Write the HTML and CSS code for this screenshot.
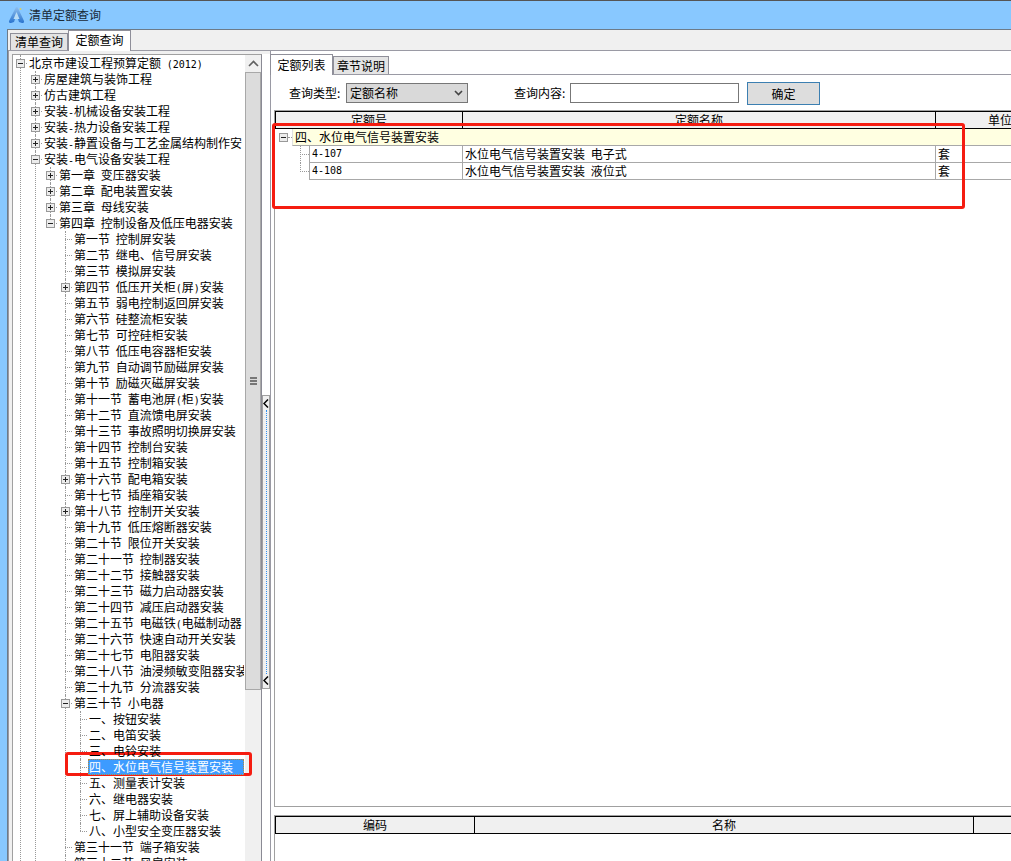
FILE: index.html
```html
<!DOCTYPE html>
<html lang="zh-CN">
<head>
    <meta charset="UTF-8">
    <title>清单定额查询</title>
    <link rel="stylesheet" href="styles.css">
</head>
<body>
    <div class="window">
        <div class="titlebar">
            <svg class="app-icon" width="17" height="18" viewBox="0 0 17 18">
                <defs>
                    <linearGradient id="iconBlue" x1="0" y1="0" x2="0" y2="1">
                        <stop offset="0" stop-color="#8fbfee"/>
                        <stop offset="1" stop-color="#2a74cf"/>
                    </linearGradient>
                </defs>
                <path d="M8 1 L1 15 Q0.5 17 3 17 L6 16 L8.5 9 L11 16 L14 17 Q16.5 17 16 15 L9.5 1 Z" fill="url(#iconBlue)"/>
                <path d="M8.5 6 L5.5 13 L11.5 13 Z" fill="#b9dcf6"/>
                <circle cx="12.5" cy="3" r="1" fill="#d8cf6a"/>
            </svg>
            <span>清单定额查询</span>
        </div>
        <div class="client">
            <div class="tabs main-tabs">
                <div class="tab">清单查询</div>
                <div class="tab active">定额查询</div>
            </div>
            <div class="main-pane">
                <div class="tree-panel">
                    <ul class="tree root">
                        <li class="more">
                            <div class="row"><i class="toggle minus"></i><span class="label">北京市建设工程预算定额 <em>(2012)</em></span></div>
                            <ul class="tree">
                                <li><div class="row"><i class="toggle plus"></i><span class="label">房屋建筑与装饰工程</span></div></li>
                                <li><div class="row"><i class="toggle plus"></i><span class="label">仿古建筑工程</span></div></li>
                                <li><div class="row"><i class="toggle plus"></i><span class="label">安装<em>-</em>机械设备安装工程</span></div></li>
                                <li><div class="row"><i class="toggle plus"></i><span class="label">安装<em>-</em>热力设备安装工程</span></div></li>
                                <li><div class="row"><i class="toggle plus"></i><span class="label">安装<em>-</em>静置设备与工艺金属结构制作安</span></div></li>
                                <li class="more">
                                    <div class="row"><i class="toggle minus"></i><span class="label">安装<em>-</em>电气设备安装工程</span></div>
                                    <ul class="tree">
                                        <li><div class="row"><i class="toggle plus"></i><span class="label">第一章 变压器安装</span></div></li>
                                        <li><div class="row"><i class="toggle plus"></i><span class="label">第二章 配电装置安装</span></div></li>
                                        <li><div class="row"><i class="toggle plus"></i><span class="label">第三章 母线安装</span></div></li>
                                        <li>
                                            <div class="row"><i class="toggle minus"></i><span class="label">第四章 控制设备及低压电器安装</span></div>
                                            <ul class="tree">
                                                <li><div class="row"><i class="toggle"></i><span class="label">第一节 控制屏安装</span></div></li>
                                                <li><div class="row"><i class="toggle"></i><span class="label">第二节 继电、信号屏安装</span></div></li>
                                                <li><div class="row"><i class="toggle"></i><span class="label">第三节 模拟屏安装</span></div></li>
                                                <li><div class="row"><i class="toggle plus"></i><span class="label">第四节 低压开关柜<em>(</em>屏<em>)</em>安装</span></div></li>
                                                <li><div class="row"><i class="toggle"></i><span class="label">第五节 弱电控制返回屏安装</span></div></li>
                                                <li><div class="row"><i class="toggle"></i><span class="label">第六节 硅整流柜安装</span></div></li>
                                                <li><div class="row"><i class="toggle"></i><span class="label">第七节 可控硅柜安装</span></div></li>
                                                <li><div class="row"><i class="toggle"></i><span class="label">第八节 低压电容器柜安装</span></div></li>
                                                <li><div class="row"><i class="toggle"></i><span class="label">第九节 自动调节励磁屏安装</span></div></li>
                                                <li><div class="row"><i class="toggle"></i><span class="label">第十节 励磁灭磁屏安装</span></div></li>
                                                <li><div class="row"><i class="toggle"></i><span class="label">第十一节 蓄电池屏<em>(</em>柜<em>)</em>安装</span></div></li>
                                                <li><div class="row"><i class="toggle"></i><span class="label">第十二节 直流馈电屏安装</span></div></li>
                                                <li><div class="row"><i class="toggle"></i><span class="label">第十三节 事故照明切换屏安装</span></div></li>
                                                <li><div class="row"><i class="toggle"></i><span class="label">第十四节 控制台安装</span></div></li>
                                                <li><div class="row"><i class="toggle"></i><span class="label">第十五节 控制箱安装</span></div></li>
                                                <li><div class="row"><i class="toggle plus"></i><span class="label">第十六节 配电箱安装</span></div></li>
                                                <li><div class="row"><i class="toggle"></i><span class="label">第十七节 插座箱安装</span></div></li>
                                                <li><div class="row"><i class="toggle plus"></i><span class="label">第十八节 控制开关安装</span></div></li>
                                                <li><div class="row"><i class="toggle"></i><span class="label">第十九节 低压熔断器安装</span></div></li>
                                                <li><div class="row"><i class="toggle"></i><span class="label">第二十节 限位开关安装</span></div></li>
                                                <li><div class="row"><i class="toggle"></i><span class="label">第二十一节 控制器安装</span></div></li>
                                                <li><div class="row"><i class="toggle"></i><span class="label">第二十二节 接触器安装</span></div></li>
                                                <li><div class="row"><i class="toggle"></i><span class="label">第二十三节 磁力启动器安装</span></div></li>
                                                <li><div class="row"><i class="toggle"></i><span class="label">第二十四节 减压启动器安装</span></div></li>
                                                <li><div class="row"><i class="toggle"></i><span class="label">第二十五节 电磁铁<em>(</em>电磁制动器</span></div></li>
                                                <li><div class="row"><i class="toggle"></i><span class="label">第二十六节 快速自动开关安装</span></div></li>
                                                <li><div class="row"><i class="toggle"></i><span class="label">第二十七节 电阻器安装</span></div></li>
                                                <li><div class="row"><i class="toggle"></i><span class="label">第二十八节 油浸频敏变阻器安装</span></div></li>
                                                <li><div class="row"><i class="toggle"></i><span class="label">第二十九节 分流器安装</span></div></li>
                                                <li>
                                                    <div class="row"><i class="toggle minus"></i><span class="label">第三十节 小电器</span></div>
                                                    <ul class="tree leafs">
                                                        <li><div class="row"><i class="toggle"></i><span class="label">一、按钮安装</span></div></li>
                                                        <li><div class="row"><i class="toggle"></i><span class="label">二、电笛安装</span></div></li>
                                                        <li><div class="row"><i class="toggle"></i><span class="label">三、电铃安装</span></div></li>
                                                        <li><div class="row"><i class="toggle"></i><span class="label selected">四、水位电气信号装置安装</span></div></li>
                                                        <li><div class="row"><i class="toggle"></i><span class="label">五、测量表计安装</span></div></li>
                                                        <li><div class="row"><i class="toggle"></i><span class="label">六、继电器安装</span></div></li>
                                                        <li><div class="row"><i class="toggle"></i><span class="label">七、屏上辅助设备安装</span></div></li>
                                                        <li><div class="row"><i class="toggle"></i><span class="label">八、小型安全变压器安装</span></div></li>
                                                    </ul>
                                                </li>
                                                <li><div class="row"><i class="toggle"></i><span class="label">第三十一节 端子箱安装</span></div></li>
                                                <li class="more"><div class="row"><i class="toggle"></i><span class="label">第三十二节 风扇安装</span></div></li>
                                            </ul>
                                        </li>
                                    </ul>
                                </li>
                            </ul>
                        </li>
                    </ul>
                    <div class="scrollbar">
                        <div class="scroll-btn">
                            <svg width="11" height="7" viewBox="0 0 11 7"><path d="M1 6 L5.5 1.5 L10 6" fill="none" stroke="#606060" stroke-width="1.6"/></svg>
                        </div>
                        <div class="scroll-thumb"><span class="grip"></span></div>
                    </div>
                </div>
                <div class="splitter">
                    <div class="split-handle">
                        <svg width="6" height="9" viewBox="0 0 6 9"><path d="M5 0.5 L1 4.5 L5 8.5" fill="none" stroke="#000" stroke-width="1.5"/></svg>
                        <span class="split-dots"></span>
                        <svg width="6" height="9" viewBox="0 0 6 9"><path d="M5 0.5 L1 4.5 L5 8.5" fill="none" stroke="#000" stroke-width="1.5"/></svg>
                    </div>
                </div>
                <div class="right-panel">
                    <div class="tabs sub-tabs">
                        <div class="tab active">定额列表</div>
                        <div class="tab">章节说明</div>
                    </div>
                    <div class="right-body">
                        <div class="query">
                            <span class="query-label">查询类型:</span>
                            <div class="select">定额名称
                                <svg width="9" height="6" viewBox="0 0 9 6"><path d="M1 1 L4.5 4.5 L8 1" fill="none" stroke="#444" stroke-width="1.6"/></svg>
                            </div>
                            <span class="query-label second">查询内容:</span>
                            <div class="input"></div>
                            <div class="btn">确定</div>
                        </div>
                        <div class="grid upper">
                            <div class="grid-head">
                                <div class="cell col-code">定额号</div>
                                <div class="cell col-name">定额名称</div>
                                <div class="cell col-unit">单位</div>
                            </div>
                            <div class="group-row">
                                <i class="toggle minus"></i>
                                <span class="group-tick"></span>
                                <div class="group-label">四、水位电气信号装置安装</div>
                            </div>
                            <div class="data-row">
                                <div class="tick"></div>
                                <div class="data code">4-107</div>
                                <div class="data name">水位电气信号装置安装 电子式</div>
                                <div class="data unit">套</div>
                            </div>
                            <div class="data-row last">
                                <div class="tick"></div>
                                <div class="data code">4-108</div>
                                <div class="data name">水位电气信号装置安装 液位式</div>
                                <div class="data unit">套</div>
                            </div>
                        </div>
                        <div class="grid lower">
                            <div class="grid-head">
                                <div class="cell col-a">编码</div>
                                <div class="cell col-b">名称</div>
                                <div class="cell col-c"></div>
                            </div>
                        </div>
                    </div>
                </div>
            </div>
        </div>
    </div>
    <!-- red marks drawn on top of the screenshot -->
    <div class="mark mark-grid"></div>
    <div class="mark mark-tree"></div>
</body>
</html>
```
FILE: styles.css
```css
html, body {
    margin: 0;
    padding: 0;
    height: 100%;
    overflow: hidden;
}

body {
    font-family: "Noto Sans CJK SC", "Liberation Sans", sans-serif;
    font-size: 12px;
    line-height: 16px;
    color: #000;
    background: #88c8ff;
    position: relative;
    word-spacing: 3px;
}

.window {
    height: 861px;
    display: flex;
    flex-direction: column;
}

.titlebar {
    height: 29px;
    flex: none;
    display: flex;
    align-items: center;
    gap: 4px;
    padding-left: 8px;
    border-top: 1px solid #555;
    box-sizing: border-box;
    color: #1a2a38;
}

.client {
    flex: 1;
    margin-left: 7px;
    background: #f0f0f0;
    border-top: 1px solid #6d7b88;
    border-left: 1px solid #6d7b88;
    min-height: 0;
}

.tabs {
    display: flex;
    align-items: flex-end;
}

.tab {
    box-sizing: border-box;
    border: 1px solid #8f8f99;
    border-bottom: none;
    background: #e4e4e4;
    text-align: center;
}

.tab.active {
    background: #fff;
}

.main-tabs {
    height: 20px;
    padding-left: 2px;
    position: relative;
    z-index: 1;
}

.main-tabs .tab {
    width: 58px;
    height: 17px;
}

.main-tabs .tab.active {
    width: 63px;
    height: 21px;
    margin-bottom: -1px;
    line-height: 18px;
}

.main-pane {
    border-top: 1px solid #9a9aa4;
    border-left: 1px solid #9a9aa4;
    background: #f0f0f0;
    height: 811px;
    display: flex;
    padding: 3px 0 0 3px;
    box-sizing: border-box;
}

.tree-panel {
    width: 250px;
    flex: none;
    box-sizing: border-box;
    background: #fff;
    border-left: 1px solid #a0a0a0;
    border-top: 1px solid #a0a0a0;
    border-right: 1px solid #8a8a94;
    display: flex;
    height: 808px;
    overflow: hidden;
}

.tree {
    list-style: none;
    margin: 0;
    padding: 0;
}

.root {
    flex: 1;
    min-width: 0;
    overflow: hidden;
    padding-left: 3px;
    margin-right: 1px;
}

.tree .tree {
    margin-left: 15px;
}

.tree li {
    position: relative;
}

/* dotted guides, they pass behind the toggle boxes */
.tree li::before {
    content: '';
    position: absolute;
    left: 4px;
    top: 0;
    bottom: 0;
    border-left: 1px dotted #999;
}

.tree li:last-child:not(.more)::before {
    bottom: auto;
    height: 8px;
}

.tree li > .row::before {
    content: '';
    position: absolute;
    left: 4px;
    top: 8px;
    width: 7px;
    border-top: 1px dotted #999;
}

.row {
    height: 16px;
    display: flex;
    align-items: center;
    white-space: nowrap;
    position: relative;
}

.toggle {
    flex: none;
    width: 9px;
    height: 9px;
    margin-right: 3px;
    box-sizing: border-box;
    position: relative;
    z-index: 1;
}

.toggle.plus, .toggle.minus {
    border: 1px solid #999;
    background: #ececec;
}

.toggle.plus::before, .toggle.minus::before {
    content: '';
    position: absolute;
    left: 1px;
    top: 3px;
    width: 5px;
    height: 1px;
    background: #222;
}

.toggle.plus::after {
    content: '';
    position: absolute;
    left: 3px;
    top: 1px;
    width: 1px;
    height: 5px;
    background: #222;
}

.label {
    padding: 0 1px;
    position: relative;
    z-index: 1;
}

/* half-width characters */
.label em {
    font-style: normal;
    font-family: "DejaVu Sans Mono", monospace;
    font-size: 10px;
    line-height: 0;
}

.label.selected {
    background: #3d9bff;
    color: #fff;
    padding-right: 11px;
    outline: 1px dotted #b98a3a;
    outline-offset: -1px;
}

.scrollbar {
    width: 16px;
    flex: none;
    background: #f0f0f0;
}

.scroll-btn {
    height: 17px;
    display: flex;
    align-items: center;
    justify-content: center;
}

.scroll-thumb {
    height: 618px;
    box-sizing: border-box;
    background: #dcdcdc;
    border: 1px solid #a8a8a8;
    display: flex;
    align-items: center;
    justify-content: center;
}

.grip {
    width: 7px;
    height: 8px;
    background: repeating-linear-gradient(#777 0 2px, #dcdcdc 2px 3px);
}

.splitter {
    width: 8px;
    flex: none;
    box-sizing: border-box;
    background: #fff;
    padding-top: 341px;
}

.split-handle {
    width: 8px;
    height: 294px;
    box-sizing: border-box;
    background: #f0f0f0;
    border: 1px solid #a0a0a0;
    display: flex;
    flex-direction: column;
    align-items: center;
    padding: 3px 0;
}

.split-dots {
    flex: 1;
    border-left: 1px dotted #2b8ff0;
    margin: 2px 0;
}

.right-panel {
    flex: 1;
    min-width: 0;
    background: #fff;
    border-left: 1px solid #9a9aa4;
    margin-top: -3px;
    padding-top: 3px;
}

.sub-tabs {
    height: 20px;
    border-bottom: 1px solid #9a9aa4;
    margin-left: -1px;
}

.sub-tabs .tab {
    width: 56px;
    height: 18px;
    line-height: 18px;
}

.sub-tabs .tab.active {
    width: 63px;
    height: 21px;
    line-height: 20px;
    margin-bottom: -1px;
}

.right-body {
    padding-left: 3px;
}

.query {
    display: flex;
    align-items: center;
    height: 35px;
}

.query-label {
    width: 57px;
    margin-left: 15px;
    flex: none;
}

.query-label.second {
    width: 56px;
    margin-left: 46px;
}

.select {
    box-sizing: border-box;
    width: 122px;
    height: 20px;
    border: 1px solid #777;
    background: #d9d9d9;
    display: flex;
    align-items: center;
    justify-content: space-between;
    padding: 0 4px 0 3px;
}

.input {
    box-sizing: border-box;
    width: 169px;
    height: 20px;
    border: 1px solid #777;
    background: #fff;
}

.btn {
    box-sizing: border-box;
    width: 73px;
    height: 23px;
    margin: 1px 0 0 8px;
    border: 1px solid #3c7fb1;
    background: #dddddd;
    text-align: center;
    line-height: 21px;
}

.grid {
    box-sizing: border-box;
    border: 1px solid #a0a0a0;
    border-right: none;
    width: 790px;
}

.upper {
    height: 697px;
}

.lower {
    margin-top: 8px;
    height: 60px;
    border-bottom: none;
}

.grid-head {
    display: flex;
    height: 18px;
    box-sizing: border-box;
    border: 1px solid #000;
    border-right: none;
    background: #f0f0f0;
}

.cell {
    box-sizing: border-box;
    text-align: center;
    border-right: 1px solid #000;
    line-height: 16px;
    flex: none;
}

.col-code { width: 187px; }
.col-name { width: 473px; }
.col-unit { width: 128px; border-right: none; }
.col-a { width: 199px; }
.col-b { width: 499px; }
.col-c { flex: 1; border-right: none; }

.group-row {
    height: 17px;
    display: flex;
    align-items: center;
    padding-left: 4px;
    box-sizing: border-box;
}

.group-row .toggle {
    margin-right: 0;
}

.group-tick {
    width: 4px;
    flex: none;
    border-top: 1px dotted #999;
}

.group-label {
    flex: 1;
    height: 17px;
    box-sizing: border-box;
    background: #ffffe1;
    border-bottom: 1px solid #a8a8a8;
    border-left: 1px solid #e0e0e0;
    padding-left: 2px;
    line-height: 16px;
}

.data-row {
    height: 17px;
    display: flex;
    box-sizing: border-box;
    line-height: 16px;
}

.tick {
    width: 34px;
    flex: none;
    position: relative;
}

.tick::before {
    content: '';
    position: absolute;
    left: 25px;
    top: 0;
    height: 8px;
    width: 8px;
    border-left: 1px dotted #999;
    border-bottom: 1px dotted #999;
}

.tick::after {
    content: '';
    position: absolute;
    left: 25px;
    top: 8px;
    bottom: 0;
    border-left: 1px dotted #999;
}

.last .tick::after {
    display: none;
}

.data {
    box-sizing: border-box;
    border-bottom: 1px solid #a8a8a8;
    border-left: 1px solid #a8a8a8;
    padding-left: 2px;
    flex: none;
}

.data.code {
    width: 153px;
    font-family: "DejaVu Sans Mono", monospace;
    font-size: 10px;
}

.data.name { width: 473px; }
.data.unit { width: 128px; }

.mark {
    position: absolute;
    box-sizing: border-box;
    border: 3px solid #f51c10;
    border-radius: 3px;
}

.mark-grid {
    left: 272px;
    top: 123px;
    width: 693px;
    height: 86px;
}

.mark-tree {
    left: 65px;
    top: 752px;
    width: 187px;
    height: 24px;
}
```
